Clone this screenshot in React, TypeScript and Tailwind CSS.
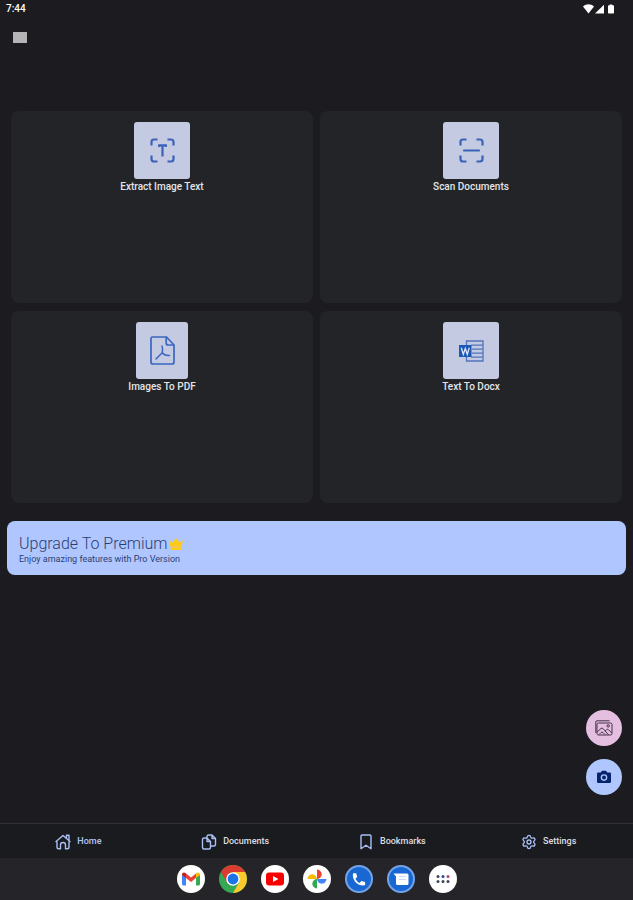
import React from "react";
import { Settings } from "lucide-react";

type IconProps = { className?: string };

function StatusIcons() {
  return (
    <svg className="h-[10px] w-[32px]" viewBox="0 0 32 10" fill="#fff" aria-hidden="true">
      <path d="M0 2.6C3.2-.5 7.8-.5 11 2.6L5.5 9.4Z" />
      <path d="M21 .8V9.4H12Z" />
      <path d="M25.8 1.3h1V.4h2.4v.9h1q.8 0 .8.8v6.6q0 .8-.8.8h-4.4q-.8 0-.8-.8V2.1q0-.8.8-.8Z" />
    </svg>
  );
}

function Corners() {
  return <path d="M1.500 7.500V4q0-2.500 2.500-2.500H7.500M17.500 1.500h3.500q2.500 0 2.500 2.500V7.500M23.500 17.500v3.500q0 2.500-2.500 2.500H17.500M7.500 23.500H4q-2.500 0-2.500-2.500V17.500" />;
}

function ExtractIcon() {
  return (
    <svg className="h-[25px] w-[25px]" viewBox="0 0 25 25" fill="none" stroke="#3a62b8" strokeWidth="2.200" aria-hidden="true">
      <Corners />
      <path d="M9.200 9V7.300h6.600V9M12.500 7.300V18.500" />
    </svg>
  );
}

function ScanIcon() {
  return (
    <svg className="h-[25px] w-[25px]" viewBox="0 0 25 25" fill="none" stroke="#3a62b8" strokeWidth="2.200" aria-hidden="true">
      <Corners />
      <path d="M5 12.500h15" strokeLinecap="round" />
    </svg>
  );
}

function PdfIcon() {
  return (
    <svg className="h-[29px] w-[25px]" viewBox="0 0 25 29" fill="none" stroke="#3a68c0" strokeWidth="1.700" strokeLinejoin="round" strokeLinecap="round" aria-hidden="true">
      <path d="M2.500 1h14l7.500 8v17q0 2-2 2H3q-2 0-2-2V2.500Q1 1 2.500 1Z" />
      <path d="M16.200 1.300V7q0 2 2 2h5.500" />
      <path d="M12 10c1 2.500.8 4.500.2 6.800L6 23M12.200 16.800c1.500 2 4 3 7.300 2.600" strokeWidth="1.500" />
    </svg>
  );
}

function DocxIcon() {
  return (
    <svg className="h-[22px] w-[25px]" viewBox="0 0 25 22" fill="none" stroke="#5374ba" strokeWidth="1.300" aria-hidden="true">
      <path d="M7.500 5V1h16.500v20H7.500v-4M12 5.200h12M13 9.200h11M13 13.200h11M12 17.200h12" />
      <path d="M0 5h12.500v12H0Z" fill="#1c59b7" stroke="none" />
      <path d="M2.300 7.800l2 6.500 2-5.800 2 5.800 2-6.500" stroke="#dce4fa" />
    </svg>
  );
}

function Crown() {
  return (
    <svg className="h-[12px] w-[14px]" viewBox="0 0 14 12" fill="#ffca19" aria-hidden="true">
      <path d="M0 2.200L3.600 4.500 7 0l3.400 4.500L14 2.200 12.600 8.800H1.400ZM1.600 9.200h10.800V12H1.600Z" />
    </svg>
  );
}

function GalleryIcon() {
  return (
    <svg className="h-[16px] w-[18px]" viewBox="0 0 18 16" fill="none" stroke="#453048" strokeWidth="1" strokeLinejoin="round" aria-hidden="true">
      <path d="M.8 13V2Q.8.800 2 .8H14.500M3.500 3h12q1.500 0 1.500 1.500v9q0 1.500-1.500 1.500h-12Q2 15 2 13.500v-9Q2 3 3.500 3Z" />
      <path d="M2.200 12L6 8.500q1-.8 2 0l5.500 6.300M10 11.200l1.700-1.700q.8-.7 1.600 0l3.500 3.500M4 14.500l2-2q1-.8 2 0l2 2" />
      <circle cx="13.200" cy="5.900" r="1.200" />
    </svg>
  );
}

function CameraIcon() {
  return (
    <svg className="h-[14px] w-[14px]" viewBox="0 0 14 14" aria-hidden="true">
      <path d="M1.200 2.500h2.500L5 .8h4l1.300 1.700h2.500q1.200 0 1.200 1.200v8q0 1.300-1.200 1.300H1.200Q0 13 0 11.700v-8q0-1.200 1.200-1.200Z" fill="#07236b" />
      <circle cx="7" cy="7.600" r="3.300" fill="#b0c6ff" />
      <circle cx="7" cy="7.600" r="2" fill="#07236b" />
    </svg>
  );
}

const navStroke = { fill: "none", stroke: "#a9bff5", strokeWidth: 1.4, strokeLinejoin: "round" as const, strokeLinecap: "round" as const };

function HomeIcon({ className }: IconProps) {
  return (
    <svg className={className} viewBox="0 0 16 16" {...navStroke} aria-hidden="true">
      <path d="M1 7.500L8 1.500l7 6M11.500 3.800V1.200H14v4.900M2 8v5q0 1.800 1.800 1.800H5.500v-4Q5.500 8.500 8 8.500t2.500 2.300v4h1.700q1.800 0 1.800-1.800V8" />
    </svg>
  );
}

function DocumentsIcon({ className }: IconProps) {
  return (
    <svg className={className} viewBox="0 0 16 16" {...navStroke} aria-hidden="true">
      <path d="M6 4H3Q1.500 4 1.500 5.500v8Q1.500 15 3 15h5q1.500 0 1.500-1.500V12M6 4l3.500 3.500V12M6 4v3.500h3.500M6 4V2.500Q6 1 7.500 1H11l3.500 3.500v6Q14.500 12 13 12H9.500M11 1v3.500h3.500" />
    </svg>
  );
}

function BookmarkIcon({ className }: IconProps) {
  return (
    <svg className={className} viewBox="0 0 16 16" {...navStroke} aria-hidden="true">
      <path d="M3 14.700V2.200Q3 1 4.200 1h7.600Q13 1 13 2.200v12.500l-5-3.500Z" />
    </svg>
  );
}

function SettingsIcon({ className }: IconProps) {
  return <Settings className={className} color="#a9bff5" strokeWidth={2} aria-hidden="true" />;
}

function GmailLogo() {
  return (
    <svg className="size-[28px]" viewBox="0 0 28 28" aria-hidden="true">
      <circle cx="14" cy="14" r="14" fill="#fff" />
      <path d="M5 9.500L9 12v8.500H6.500Q5 20.500 5 19Z" fill="#4285f4" />
      <path d="M19 12l4-2.500V19q0 1.500-1.500 1.500H19Z" fill="#34a853" />
      <path d="M9 8.500l5 4 5-4V13l-5 4-5-4Z" fill="#ea4335" />
      <path d="M5 9.500C5 7.200 7.500 6.800 9 8.500V13l-4-3Z" fill="#c5221f" />
      <path d="M23 9.500c0-2.300-2.500-2.700-4-1V13l4-3Z" fill="#fbbc04" />
    </svg>
  );
}

function ChromeLogo() {
  return (
    <svg className="size-[28px]" viewBox="0 0 28 28" aria-hidden="true">
      <circle cx="14" cy="14" r="14" fill="#34a853" />
      <path d="M14 0A14 14 0 0 1 26.100 7H14L8 17.500 1.900 7A14 14 0 0 1 14 0Z" fill="#db3c2f" />
      <path d="M26.100 7A14 14 0 0 1 14 28L20.100 17.500 14 7Z" fill="#f9c92d" />
      <circle cx="14" cy="14" r="6.800" fill="#fff" />
      <circle cx="14" cy="14" r="5.400" fill="#1a73e8" />
    </svg>
  );
}

function YoutubeLogo() {
  return (
    <svg className="size-[28px]" viewBox="0 0 28 28" aria-hidden="true">
      <circle cx="14" cy="14" r="14" fill="#fff" />
      <rect x="5" y="7.500" width="18" height="13" rx="3" fill="#f80000" />
      <path d="M12 11l5.500 3-5.500 3Z" fill="#fff" />
    </svg>
  );
}

function PhotosLogo() {
  return (
    <svg className="size-[28px]" viewBox="0 0 28 28" aria-hidden="true">
      <circle cx="14" cy="14" r="14" fill="#fff" />
      <path d="M14 4.500a4.700 4.700 0 0 1 0 9.400Z" fill="#ea4335" />
      <path d="M23.500 14a4.700 4.700 0 0 1-9.400 0Z" fill="#4285f4" />
      <path d="M14 23.500a4.700 4.700 0 0 1 0-9.400Z" fill="#34a853" />
      <path d="M4.500 14a4.700 4.700 0 0 1 9.400 0Z" fill="#fbbc04" />
    </svg>
  );
}

function PhoneLogo() {
  return (
    <svg className="size-[28px]" viewBox="0 0 28 28" aria-hidden="true">
      <circle cx="14" cy="14" r="13" fill="#1967d2" stroke="#74a4e8" strokeWidth="2" />
      <path d="M8 8.200h3.200l1 3.700-1.800 1.800c1 2 2.300 3.300 4.200 4.200l1.800-1.800 3.700 1V20.300C12.500 21.500 6.800 15 8 8.200Z" fill="#fff" />
    </svg>
  );
}

function MessagesLogo() {
  return (
    <svg className="size-[28px]" viewBox="0 0 28 28" aria-hidden="true">
      <circle cx="14" cy="14" r="13" fill="#1967d2" stroke="#74a4e8" strokeWidth="2" />
      <path d="M6.500 8.500h13.500q1.500 0 1.500 1.500v8.500q0 1.500-1.500 1.500h-9.500Q9 20 9 18.500v-7Z" fill="#fff" />
      <path d="M12 11.500h7M12 14.500h7" stroke="#c6dafc" />
    </svg>
  );
}

function AppsLogo() {
  return (
    <svg className="size-[28px]" viewBox="0 0 28 28" fill="#40465c" aria-hidden="true">
      <circle cx="14" cy="14" r="14" fill="#fff" />
      <circle cx="9" cy="11.500" r="1.500" />
      <circle cx="14" cy="11.500" r="1.500" fill="#3145a0" />
      <circle cx="19" cy="11.500" r="1.500" fill="#b14a67" />
      <circle cx="9" cy="16.500" r="1.500" />
      <circle cx="14" cy="16.500" r="1.500" />
      <circle cx="19" cy="16.500" r="1.500" />
    </svg>
  );
}

const tools = [
  { label: "Extract Image Text", Icon: ExtractIcon, tile: "w-[56px]" },
  { label: "Scan Documents", Icon: ScanIcon, tile: "w-[56px]" },
  { label: "Images To PDF", Icon: PdfIcon, tile: "w-[52px]" },
  { label: "Text To Docx", Icon: DocxIcon, tile: "w-[56px]" },
];

const tabs = [
  { label: "Home", Icon: HomeIcon, color: "text-[#b0c6ff]" },
  { label: "Documents", Icon: DocumentsIcon, color: "text-[#dedee2]" },
  { label: "Bookmarks", Icon: BookmarkIcon, color: "text-[#dedee2]" },
  { label: "Settings", Icon: SettingsIcon, color: "text-[#dedee2]" },
];

const dock = [
  { name: "Gmail", Logo: GmailLogo },
  { name: "Chrome", Logo: ChromeLogo },
  { name: "YouTube", Logo: YoutubeLogo },
  { name: "Photos", Logo: PhotosLogo },
  { name: "Phone", Logo: PhoneLogo },
  { name: "Messages", Logo: MessagesLogo },
  { name: "All apps", Logo: AppsLogo },
];

export default function App() {
  return (
    <div className="flex min-h-screen flex-col bg-[#1c1c20] font-['Roboto',sans-serif] text-[#e4e4e8]">
      <div className="flex h-[18px] items-center justify-between pr-[18px] pl-[6px]">
        <span className="text-[10px] leading-[18px] font-medium text-white">7:44</span>
        <StatusIcons />
      </div>

      <header className="flex h-[38px] items-center pl-2">
        <button type="button" aria-label="Menu" className="flex h-6 w-6 items-center justify-center">
          <svg className="h-[11px] w-[14px]" viewBox="0 0 14 11" aria-hidden="true">
            <rect width="14" height="11" fill="#b5b5b7" />
          </svg>
        </button>
      </header>

      <main className="flex flex-1 flex-col px-[7px] pt-[55px]">
        <div className="grid grid-cols-2 gap-x-[7px] gap-y-2 px-1">
          {tools.map(({ label, Icon, tile }) => (
            <button
              key={label}
              type="button"
              className="flex h-[192px] flex-col items-center rounded-lg bg-[#222428] pt-[11px]"
            >
              <span className={`flex h-[57px] items-center justify-center rounded-[3px] bg-[#c5cae3] ${tile}`}>
                <Icon />
              </span>
              <span className="text-[10px] leading-4 font-medium">{label}</span>
            </button>
          ))}
        </div>

        <button
          type="button"
          className="mt-[18px] flex h-[54px] flex-col items-start justify-center rounded-lg bg-[#b0c6ff] px-3 pt-px text-[#2b3f72]"
        >
          <span className="flex items-center gap-[2px] text-[16px] leading-5 font-light">
            Upgrade To Premium
            <Crown />
          </span>
          <span className="text-[9px] leading-[10px]">Enjoy amazing features with Pro Version</span>
        </button>

        <div className="mt-auto mb-7 flex flex-col gap-[13px] self-end pr-1">
          <button type="button" aria-label="Gallery" className="flex size-9 items-center justify-center rounded-full bg-[#e5bfe0]">
            <GalleryIcon />
          </button>
          <button type="button" aria-label="Camera" className="flex size-9 items-center justify-center rounded-full bg-[#b0c6ff]">
            <CameraIcon />
          </button>
        </div>
      </main>

      <nav className="grid h-[35px] grid-cols-4 border-t border-[#303035] bg-[#1a1b1e] pt-px pr-[6px]">
        {tabs.map(({ label, Icon, color }) => (
          <a key={label} href="#" className={`flex items-center justify-center gap-[6px] text-[9px] font-medium ${color}`}>
            <Icon className="size-4" />
            {label}
          </a>
        ))}
      </nav>

      <footer className="flex h-[42px] items-center justify-center gap-[14px] bg-[#252529]">
        {dock.map(({ name, Logo }) => (
          <button key={name} type="button" aria-label={name}>
            <Logo />
          </button>
        ))}
      </footer>
    </div>
  );
}
